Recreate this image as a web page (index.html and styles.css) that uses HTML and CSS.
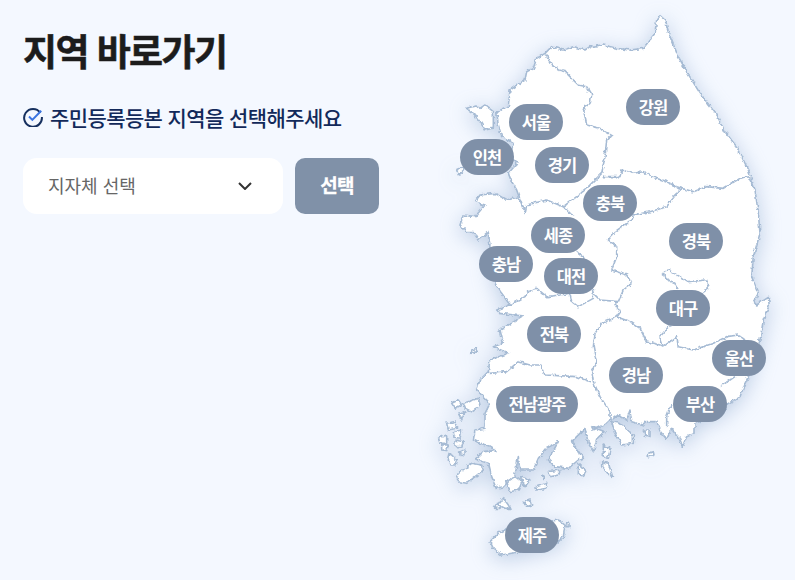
FILE: index.html
```html
<!DOCTYPE html>
<html lang="ko">
<head>
  <meta charset="UTF-8" />
  <meta name="viewport" content="width=device-width, initial-scale=1.0">
  <title>지역 바로가기</title>
  <link rel="stylesheet" href="styles.css">
</head>
<body>
  <div class="page">
    <section class="panel">
      <h1>지역 바로가기</h1>
      <p class="guide">
        <svg class="guide-icon" viewBox="0 0 18 18" aria-hidden="true">
          <path class="ring" d="M15.6 5.2A8 8 0 1 0 17 9"/>
          <path class="tick" d="M5.4 8.6l3 3L16.4 3.4"/>
        </svg>
        주민등록등본 지역을 선택해주세요
      </p>
      <div class="picker">
        <div class="select">
          <span class="select-label">지자체 선택</span>
          <svg class="chevron" viewBox="0 0 14 8" aria-hidden="true"><path d="M1 1l6 6 6-6"/></svg>
        </div>
        <button class="pick-button">선택</button>
      </div>
    </section>

    <div class="map">
      <svg class="map-shape" viewBox="0 0 1050 1740" aria-hidden="true">
        <defs>
          <filter id="coast" x="0" y="0" width="1050" height="1740" filterUnits="userSpaceOnUse" primitiveUnits="userSpaceOnUse">
            <feTurbulence type="fractalNoise" baseFrequency="0.08" numOctaves="3" seed="4"/>
            <feDisplacementMap in="SourceGraphic" scale="13" xChannelSelector="R" yChannelSelector="G"/>
            <feGaussianBlur stdDeviation="0.9"/>
          </filter>
        </defs>
        <g filter="url(#coast)">
          <path class="land" d="M690 47L705 60 720 110 745 170 770 215 810 280 860 345 885 395 920 440 955 510 975 570 985 640 990 700 970 770 965 830 985 880 970 905 980 915 1015 892 1018 915 1000 960 990 1020 965 1110 945 1150 930 1190 895 1210 880 1240 795 1270 795 1300 770 1310 757 1340 745 1310 725 1285 710 1318 695 1300 680 1265 650 1265 640 1275 605 1265 600 1230 590 1260 560 1245 540 1260 530 1270 490 1290 485 1280 525 1295 500 1320 490 1355 475 1330 465 1285 425 1325 460 1375 445 1380 415 1405 375 1400 355 1380 385 1325 350 1345 325 1375 310 1410 270 1410 265 1370 255 1425 245 1435 220 1460 200 1465 185 1430 175 1390 135 1378 160 1355 195 1352 185 1340 150 1330 130 1320 135 1290 165 1285 165 1240 180 1210 140 1170 150 1140 175 1115 180 1080 235 1060 190 1040 220 1030 210 990 235 975 280 948 210 940 200 930 240 915 215 880 195 850 180 740 175 695 145 720 130 695 110 695 90 675 100 645 135 650 165 615 135 605 150 585 195 580 230 600 265 590 285 640 260 570 245 545 235 520 262 490 240 470 250 430 215 410 205 375 200 335 235 320 240 270 285 240 290 215 310 205 320 175 345 160 365 140 400 150 430 140 465 150 480 140 520 135 560 145 600 150 640 145 675 100 680 60Z"/>
          <path class="land" d="M110 325L135 318 150 325 165 315 190 335 190 385 165 390 150 365 130 340Z M80 510L95 503 100 515 85 525Z M125 1050L140 1045 140 1055 125 1060Z"/>
          <path class="land" d="M65 1210L85 1200 95 1215 75 1225Z M100 1210L130 1200 145 1195 150 1215 125 1235 105 1225Z M85 1240L105 1235 95 1260Z M50 1270L75 1265 80 1285 55 1290Z M70 1295L95 1290 90 1315 72 1312Z M25 1315L50 1305 50 1330 30 1330Z M35 1335L55 1335 50 1352 35 1350Z M75 1320L100 1325 95 1340 75 1340Z M85 1360L105 1350 105 1365Z M60 1360L80 1380 75 1395 60 1395 55 1380Z M85 1420L125 1390 155 1395 160 1410 135 1430 110 1450 85 1445 80 1430Z"/>
          <path class="land" d="M230 1445L255 1430 275 1445 265 1470 240 1475Z M270 1430L300 1440 285 1460Z M315 1462L350 1450 350 1465 320 1470Z M335 1425L345 1430 340 1435Z M355 1415L390 1410 385 1425 360 1430Z M445 1390L470 1415 460 1430 445 1420Z M515 1385L535 1390 548 1430 538 1425 515 1400Z M520 1335L540 1345 535 1375 520 1370Z M545 1265L570 1270 610 1305 610 1330 575 1335 555 1300Z M640 1290L660 1290 660 1310 645 1305Z M655 1360L670 1355 672 1365 655 1370Z"/>
          <path class="land" d="M205 1515L220 1495 235 1515 240 1525 225 1525Z M190 1520L205 1510 210 1525 195 1525Z M283 1505L300 1500 305 1515 290 1520Z M180 1625L205 1600 235 1585 385 1560 405 1575 400 1610 380 1630 300 1650 245 1660 215 1665 190 1645Z M410 1570L420 1570 420 1580 410 1580Z"/>
          <path class="border" d="M345 160L365 195 385 210 405 215 425 235 445 255 470 260 485 285 480 310 460 325 465 350 470 375 510 385 545 405 530 420 525 470 515 520 490 545 465 570 440 590 400 620 420 640 430 645"/>
          <path class="border" d="M520 530L570 530 575 510 610 520 640 515 665 530 710 545 740 560 790 575 830 560 880 565 930 535 955 530 975 570"/>
          <path class="border" d="M760 565L730 590 740 580 710 620 660 635 610 645 605 660 555 695 535 720 560 740 560 770 545 810 590 825 605 850 580 870 565 905 510 900 490 880"/>
          <path class="border" d="M285 640L290 615 350 600 400 620"/>
          <path class="border" d="M440 755L460 770 490 880 490 895 445 920 425 905 420 880"/>
          <path class="border" d="M240 915L285 890 300 870 320 865 350 890 390 885 420 880"/>
          <path class="border" d="M565 905L555 910 570 935 560 950 515 970 495 1000 490 1040 500 1090 485 1115 490 1145 510 1190 540 1235 540 1260"/>
          <path class="border" d="M175 1115L180 1120 230 1115 265 1085 300 1095 330 1095 345 1125 440 1130 480 1145"/>
          <path class="border" d="M560 950L600 965 630 985 650 1025 690 1035 700 1040 740 1010 745 1040 790 1050 850 1030 890 1010 925 1005 945 1020"/>
          <path class="border" d="M700 815L715 810 750 830 770 845 830 840 835 865 810 885 M700 820L705 835 735 850 745 870 M720 975L690 1010 700 1040"/>
          <path class="border" d="M915 1130L900 1140 870 1160 M725 1210L710 1250 710 1280"/>
        </g>
      </svg>

      <a class="pin pin-gangwon">강원</a>
      <a class="pin pin-seoul">서울</a>
      <a class="pin pin-incheon">인천</a>
      <a class="pin pin-gyeonggi">경기</a>
      <a class="pin pin-chungbuk">충북</a>
      <a class="pin pin-sejong">세종</a>
      <a class="pin pin-gyeongbuk">경북</a>
      <a class="pin pin-chungnam">충남</a>
      <a class="pin pin-daejeon">대전</a>
      <a class="pin pin-daegu">대구</a>
      <a class="pin pin-jeonbuk">전북</a>
      <a class="pin pin-gyeongnam">경남</a>
      <a class="pin pin-ulsan">울산</a>
      <a class="pin pin-jeonnam">전남광주</a>
      <a class="pin pin-busan">부산</a>
      <a class="pin pin-jeju">제주</a>
    </div>
  </div>
</body>
</html>
```

FILE: styles.css
```css
* {
  box-sizing: border-box;
}
body {
  margin: 0;
  height: 580px;
  overflow: hidden;
  background: #f4f8ff;
  font-family: "Noto Sans CJK KR", "Noto Sans", sans-serif;
}
.page {
  display: flex;
  justify-content: space-between;
  width: 795px;
  height: 580px;
}
.panel {
  width: 400px;
  padding: 24px 0 0 23px;
}
h1 {
  margin: 0;
  font-size: 37px;
  line-height: 52px;
  font-weight: 700;
  letter-spacing: -1.6px;
  color: #1c1c1c;
  -webkit-text-stroke: 0.5px #1c1c1c;
}
.guide {
  display: flex;
  align-items: center;
  gap: 7px;
  margin: 26px 0 0 0;
  font-size: 21px;
  line-height: 30px;
  font-weight: 500;
  letter-spacing: -0.6px;
  color: #12295a;
}
.guide-icon {
  width: 20px;
  height: 20px;
  fill: none;
  stroke-width: 1.8;
}
.ring {
  stroke: #16305f;
}
.tick {
  stroke: #3b74e0;
}
.picker {
  display: flex;
  gap: 12px;
  margin-top: 26px;
}
.select {
  display: flex;
  align-items: center;
  justify-content: space-between;
  width: 260px;
  height: 56px;
  padding: 0 31px 0 25px;
  background: #fff;
  border-radius: 14px;
  font-size: 18px;
  color: #666;
}
.select-label {
  padding-bottom: 3px;
}
.chevron {
  width: 14px;
  height: 8px;
  fill: none;
  stroke: #333;
  stroke-width: 2;
}
.pick-button {
  width: 84px;
  height: 56px;
  padding: 0 0 3px;
  border: none;
  border-radius: 10px;
  background: #8091a8;
  color: #fff;
  font-family: inherit;
  font-size: 19px;
  font-weight: 700;
  letter-spacing: -0.8px;
  -webkit-text-stroke: 0.3px #fff;
}
.map {
  position: relative;
  width: 365px;
  height: 580px;
}
.map-shape {
  display: block;
  width: 350px;
  height: 580px;
  filter: drop-shadow(0 4px 10px rgba(110, 145, 190, 0.4));
}
.land {
  fill: #fff;
  stroke: #a6bbd4;
  stroke-width: 4.8;
  stroke-linejoin: round;
}
.border {
  fill: none;
  stroke: #a6bbd4;
  stroke-width: 4.8;
  stroke-linejoin: round;
}
.pin {
  position: absolute;
  display: flex;
  align-items: center;
  justify-content: center;
  width: 54px;
  height: 36px;
  border-radius: 18px;
  background: #7f90a8;
  color: #fff;
  font-size: 16.5px;
  font-weight: 700;
  letter-spacing: -0.9px;
}
/* map is placed at x=430, pins are relative to it */
.pin-gangwon { left: 196px; top: 89px; }
.pin-seoul { left: 79px; top: 104px; }
.pin-incheon { left: 30px; top: 139px; }
.pin-gyeonggi { left: 105px; top: 147px; }
.pin-chungbuk { left: 153px; top: 185px; }
.pin-sejong { left: 101px; top: 217px; }
.pin-gyeongbuk { left: 239px; top: 223px; }
.pin-chungnam { left: 49px; top: 246px; }
.pin-daejeon { left: 114px; top: 258px; }
.pin-daegu { left: 226px; top: 290px; }
.pin-jeonbuk { left: 97px; top: 316px; }
.pin-gyeongnam { left: 179px; top: 357px; }
.pin-ulsan { left: 282px; top: 340px; }
.pin-jeonnam { left: 66px; top: 386px; width: 82px; }
.pin-busan { left: 243px; top: 386px; }
.pin-jeju { left: 75px; top: 517px; }
```
